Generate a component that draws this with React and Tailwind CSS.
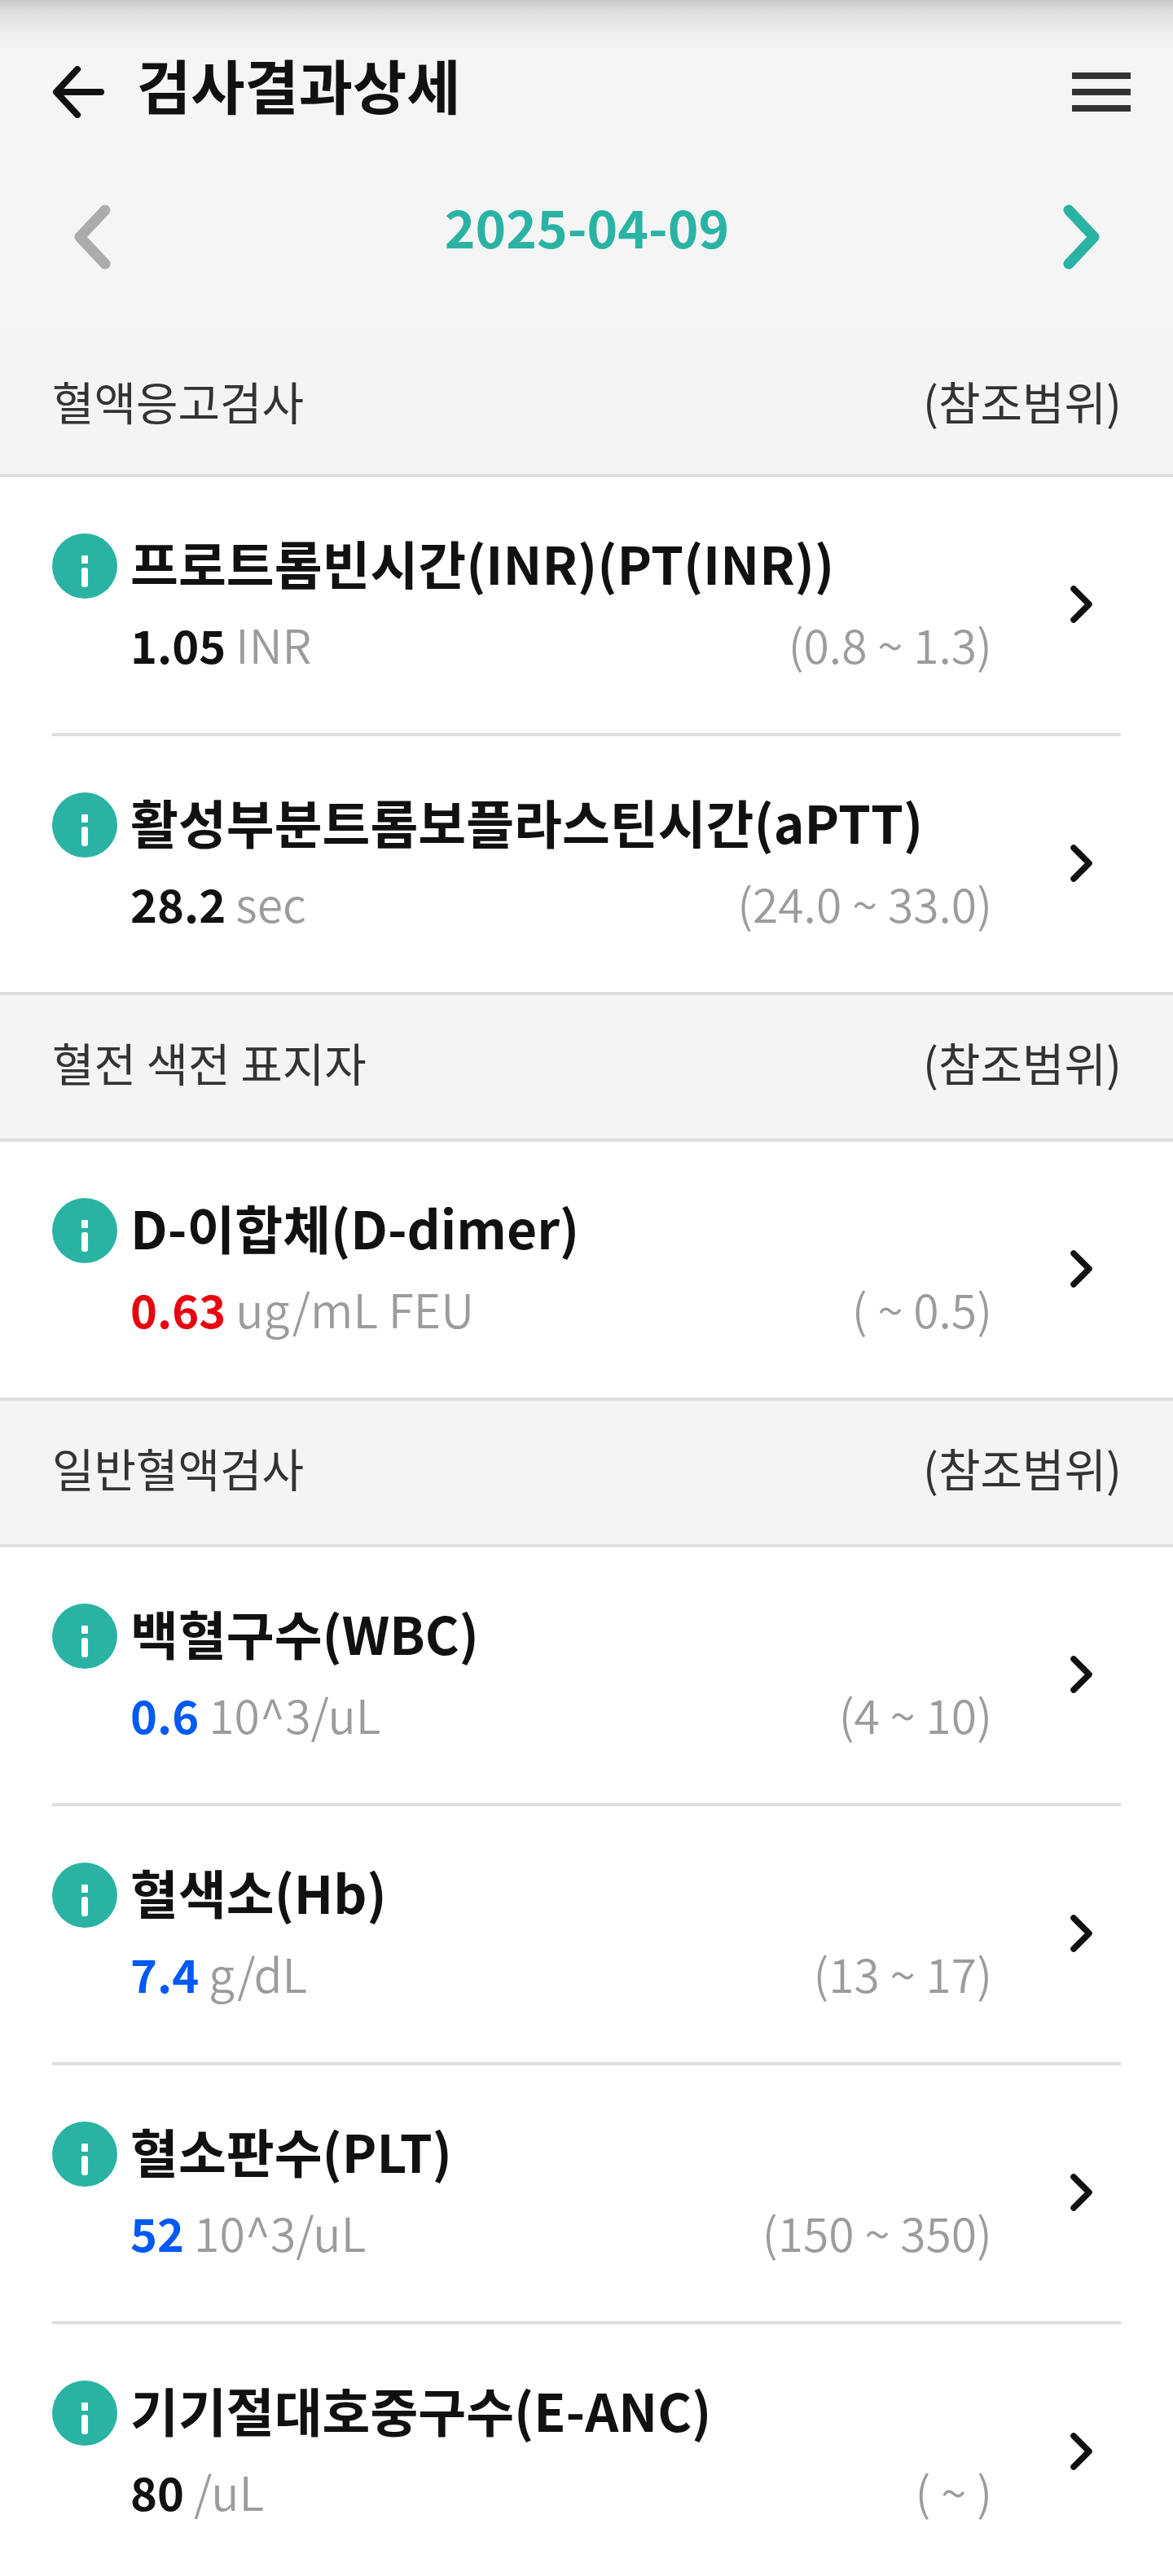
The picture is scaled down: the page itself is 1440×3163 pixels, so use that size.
import React from 'react';

const SECTIONS = [
  {
    title: '혈액응고검사',
    items: [
      { name: '프로트롬빈시간(INR)(PT(INR))', value: '1.05', unit: 'INR', range: '(0.8 ~ 1.3)', tone: 'text-[#111111]' },
      { name: '활성부분트롬보플라스틴시간(aPTT)', value: '28.2', unit: 'sec', range: '(24.0 ~ 33.0)', tone: 'text-[#111111]' },
    ],
  },
  {
    title: '혈전 색전 표지자',
    items: [
      { name: 'D-이합체(D-dimer)', value: '0.63', unit: 'ug/mL FEU', range: '( ~ 0.5)', tone: 'text-[#e8000f]' },
    ],
  },
  {
    title: '일반혈액검사',
    items: [
      { name: '백혈구수(WBC)', value: '0.6', unit: '10^3/uL', range: '(4 ~ 10)', tone: 'text-[#0059f0]' },
      { name: '혈색소(Hb)', value: '7.4', unit: 'g/dL', range: '(13 ~ 17)', tone: 'text-[#0059f0]' },
      { name: '혈소판수(PLT)', value: '52', unit: '10^3/uL', range: '(150 ~ 350)', tone: 'text-[#0059f0]' },
      { name: '기기절대호중구수(E-ANC)', value: '80', unit: '/uL', range: '( ~ )', tone: 'text-[#111111]' },
    ],
  },
];

function InfoIcon() {
  return (
    <svg width="80" height="80" viewBox="0 0 80 80" className="shrink-0 translate-y-[3px]">
      <circle cx="40" cy="40" r="40" fill="#2ab3a3" />
      <rect x="36" y="27" width="8" height="10" rx="1" fill="#fff" />
      <rect x="36" y="42" width="8" height="24" rx="3" fill="#fff" />
    </svg>
  );
}

function Item({ item, last }) {
  return (
    <div className={`flex h-[318px] items-center ${last ? 'border-b-4 border-[#dedede] px-16' : 'px-0'}`}>
      <div className={`flex h-full flex-1 items-center ${last ? '' : 'mx-16 border-b-4 border-[#dedede]'}`}>
        <div className="-mt-2 flex-1">
          <div className="flex items-center gap-4">
            <InfoIcon />
            <div className="-mt-1 text-[64px] leading-[80px] font-bold text-[#111111]">{item.name}</div>
          </div>
          <div className="mt-[22px] flex items-center justify-between pl-24 text-[57px] leading-[72px]">
            <div>
              <span className={`text-[56px] font-bold ${item.tone}`}>{item.value}</span>
              <span className="ml-3 font-[350] text-[#9c9c9c]">{item.unit}</span>
            </div>
            <div className="font-[350] text-[#9c9c9c]">{item.range}</div>
          </div>
        </div>
        <svg width="28" height="46" viewBox="0 0 28 46" fill="none" className="ml-[96px] mr-[34px] shrink-0 -translate-y-[1px]">
          <path d="M4 4 L23 23 L4 42" stroke="#111111" strokeWidth="7.5" strokeLinecap="round" strokeLinejoin="round" />
        </svg>
      </div>
    </div>
  );
}

function Section({ section, first }) {
  return (
    <>
      <div className="flex h-[180px] items-center justify-between border-b-4 border-[#dedede] bg-[#f4f4f4] pr-[63px] pl-16 text-[56px] leading-none text-[#333333]">
        <span className={first ? '-mt-1' : '-mt-3'}>{section.title}</span>
        <span className={first ? '-mt-1' : '-mt-3'}>(참조범위)</span>
      </div>
      {section.items.map((item, i) => (
        <Item key={item.name} item={item} last={i === section.items.length - 1} />
      ))}
    </>
  );
}

export default function App() {
  return (
    <div className="h-[3163px] overflow-hidden bg-white font-['Noto_Sans_CJK_KR','Noto_Sans',sans-serif]">
      <div className="h-[406px] bg-[linear-gradient(to_bottom,#c8c8c8_0px,#dcdcdc_12px,#eeeeee_40px,#f5f5f5_60px)]">
        <div className="flex items-center justify-between pt-[64px] pr-[52px] pl-[64px]">
          <div className="flex items-center gap-10">
            <svg width="64" height="64" viewBox="0 0 64 64" fill="none" className="mt-[17px]">
              <path d="M31 4 L5 32 L31 60 M5 32 H60" stroke="#111111" strokeWidth="8" strokeLinecap="round" strokeLinejoin="round" />
            </svg>
            <h1 className="-mt-1 text-[72px] leading-[80px] font-bold text-[#111111]">검사결과상세</h1>
          </div>
          <div className="mt-4 flex w-[72px] flex-col gap-3">
            <div className="h-2 bg-[#333333]" />
            <div className="h-2 bg-[#333333]" />
            <div className="h-2 bg-[#333333]" />
          </div>
        </div>
        <div className="mt-[106px] flex items-center justify-between pr-[88px] pl-[89px]">
          <svg width="48" height="80" viewBox="0 0 48 80" fill="none">
            <path d="M40 7 L9 40 L40 73" stroke="#ababab" strokeWidth="13" strokeLinecap="round" strokeLinejoin="round" />
          </svg>
          <div className="-mt-7 text-[64px] leading-[80px] font-bold text-[#2ab3a3]">2025-04-09</div>
          <svg width="48" height="80" viewBox="0 0 48 80" fill="none">
            <path d="M8 7 L39 40 L8 73" stroke="#2ab3a3" strokeWidth="13" strokeLinecap="round" strokeLinejoin="round" />
          </svg>
        </div>
      </div>
      {SECTIONS.map((section, i) => (
        <Section key={section.title} section={section} first={i === 0} />
      ))}
    </div>
  );
}
